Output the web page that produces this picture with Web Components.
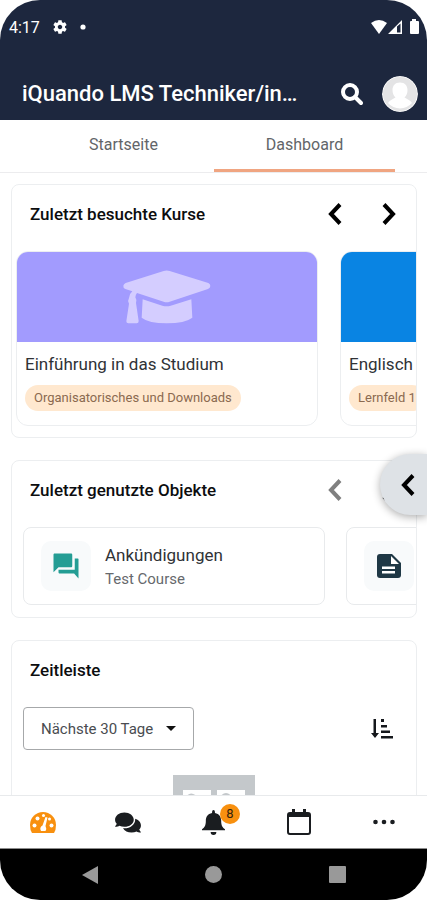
<!DOCTYPE html>
<html lang="de">
<head>
<meta charset="utf-8">
<meta name="viewport" content="width=device-width, initial-scale=1">
<title>iQuando LMS</title>
<style>
  html, body { margin: 0; height: 100%; background: #fff; }
  body { font-family: Roboto, "Liberation Sans", sans-serif; color: #15171a; }
</style>
</head>
<body>
<device-frame>
  <status-bar slot="top" time="4:17"></status-bar>
  <app-header slot="top">iQuando LMS Techniker/in…</app-header>
  <tab-strip slot="top">
    <tab-item>Startseite</tab-item>
    <tab-item selected>Dashboard</tab-item>
  </tab-strip>

  <block-card heading="Zuletzt besuchte Kurse" pager>
    <card-row class="courses">
      <course-card tag="Organisatorisches und Downloads">Einführung in das Studium
        <svg slot="art" width="88" height="54" viewBox="38 31 264 162" fill="#d4cdff" aria-hidden="true"><path d="M160 34Q169 31 178 34L294 70Q300 73 300 79Q300 85 293 88L178 126Q169 129 160 126L80 100Q76 104 75 113Q80 120 77 130L85 184Q85 191 79 191H54Q48 191 48 185L56 132Q51 123 56 115Q58 101 66 95L45 88Q38 85 39 78Q40 73 46 70Z"/><path d="M97 119L156 138Q169 142 181 138L243 119L246 174Q224 191 169 191Q115 191 94 174Z"/></svg>
      </course-card>
      <course-card tag="Lernfeld 1" color="#0984e3">Englisch</course-card>
    </card-row>
  </block-card>

  <block-card heading="Zuletzt genutzte Objekte" pager at-start>
    <card-row class="objects">
      <object-card sub="Test Course">Ankündigungen
        <svg slot="icon" width="30" height="30" viewBox="0 0 24 24" fill="#249d94" aria-hidden="true"><path d="M21.500 6H19v9H6v2c0 .55.45 1 1 1h11.500l3.500 4V6.500c0-.3-.2-.5-.5-.5zM17 12V3c0-.55-.45-1-1-1H3c-.55 0-1 .45-1 1v14l4-4h10c.55 0 1-.45 1-1z"/></svg>
      </object-card>
      <object-card>
        <svg slot="icon" width="24" height="24" viewBox="0 0 24 24" aria-hidden="true"><path fill="#1f3845" d="M3 0H15L24 9V21Q24 24 21 24H3Q0 24 0 21V3Q0 0 3 0Z"/><path fill="#fff" d="M14 2V10H22ZM5 12.500H18V15H5ZM5 17H18V19.500H5Z"/></svg>
      </object-card>
    </card-row>
  </block-card>

  <block-card heading="Zeitleiste">
    <timeline-tools></timeline-tools>
    <empty-art></empty-art>
  </block-card>

  <drawer-handle slot="overlay"></drawer-handle>
  <bottom-nav slot="bottom"></bottom-nav>
  <system-nav slot="bottom"></system-nav>
</device-frame>

<script>
const RESET = `
  :host, *, *::before, *::after { box-sizing: border-box; }
  button { font: inherit; color: inherit; background: none; border: 0; margin: 0; padding: 0; display: grid; place-items: center; cursor: pointer; }
  svg { display: block; }
`;
const define = (name, render) => customElements.define(name, class extends HTMLElement {
  constructor() {
    super();
    this.attachShadow({ mode: 'open' });
  }
  connectedCallback() {
    const t = document.createElement('template');
    const { css, html } = render(this);
    t.innerHTML = `<style>${RESET}${css}</style>${html}`;
    this.shadowRoot.replaceChildren(t.content.cloneNode(true));
  }
});

const chevron = (dir) => `<svg width="14" height="22" viewBox="0 0 14 22" fill="none" stroke="currentColor" stroke-width="4" aria-hidden="true"><path d="${dir === 'left' ? 'M12 1.500L3 11L12 20.500' : 'M2 1.500L11 11L2 20.500'}"/></svg>`;

define('device-frame', () => ({
  css: `
    :host { display: flex; flex-direction: column; height: 100vh; border-radius: 40px; overflow: hidden; position: relative; background: #fff; }
    main { flex: 1; min-height: 0; overflow: hidden; display: flex; flex-direction: column; gap: 22px; padding: 11px 10px 0 11px; }
    ::slotted(block-card) { flex: none; }
  `,
  html: `<slot name="top"></slot><main><slot></slot></main><slot name="bottom"></slot><slot name="overlay"></slot>`
}));

define('status-bar', (el) => ({
  css: `
    :host { display: flex; align-items: center; gap: 13px; height: 54px; padding: 0 7px 0 9px; background: #1d273e; color: #fff; font-size: 16px; }
    .right { margin-left: auto; }
  `,
  html: `
    <span>${el.getAttribute('time')}</span>
    <svg width="14" height="14" viewBox="2 2 20 20" fill="#fff" aria-hidden="true"><path d="M19.140 12.940c.04-.3.06-.61.06-.94 0-.32-.02-.64-.07-.94l2.030-1.580c.18-.14.23-.41.12-.61l-1.920-3.320c-.12-.22-.37-.29-.59-.22l-2.390.96c-.5-.38-1.030-.7-1.620-.94l-.36-2.540c-.04-.24-.24-.41-.48-.41h-3.840c-.24 0-.43.17-.47.41l-.36 2.540c-.59.24-1.130.57-1.620.94l-2.390-.96c-.22-.08-.47 0-.59.22L2.740 8.870c-.12.21-.08.47.12.61l2.030 1.580c-.05.3-.09.63-.09.94s.02.64.07.94l-2.030 1.580c-.18.14-.23.41-.12.61l1.920 3.320c.12.22.37.29.59.22l2.390-.96c.5.38 1.030.7 1.620.94l.36 2.540c.05.24.24.41.48.41h3.840c.24 0 .44-.17.47-.41l.36-2.540c.59-.24 1.130-.56 1.620-.94l2.390.96c.22.08.47 0 .59-.22l1.920-3.320c.12-.22.07-.47-.12-.61l-2.010-1.580zM12 15.200c-1.770 0-3.200-1.430-3.200-3.200s1.430-3.200 3.200-3.200 3.200 1.430 3.200 3.200-1.430 3.200-3.200 3.200z"/></svg>
    <svg width="6" height="6" viewBox="0 0 6 6" fill="#fff" aria-hidden="true"><circle cx="3" cy="3" r="2.600"/></svg>
    <svg class="right" width="50" height="16" viewBox="0 0 50 16" aria-hidden="true">
      <path fill="#fff" d="M1 4Q9-2 17 4L9 15Z"/>
      <path fill="#fff" fill-rule="evenodd" d="M18 15L32 1V15ZM27 7.500V13.500H30.500V4.500Z"/>
      <path fill="#fff" d="M42 0H46V2H48Q49 2 49 3V14Q49 15 48 15H41Q40 15 40 14V3Q40 2 41 2H42Z"/>
    </svg>`
}));

define('app-header', () => ({
  css: `
    :host { display: block; background: #1d273e; color: #fff; }
    header { display: flex; align-items: center; height: 66px; padding: 14px 9px 0 22px; }
    h1 { margin: 0; flex: 1; min-width: 0; font-size: 22px; line-height: 28px; font-weight: 500; white-space: nowrap; overflow: hidden; text-overflow: ellipsis; }
    button { width: 24px; height: 36px; margin: 0 18px 0 16px; }
    .avatar { width: 36px; margin: 0; border-radius: 50%; overflow: hidden; }
  `,
  html: `<header><h1><slot></slot></h1>
    <button aria-label="Suche"><svg width="22" height="23" viewBox="0 0 22 23" fill="none" stroke="#fff" stroke-width="4" aria-hidden="true"><circle cx="9" cy="9" r="7"/><path d="M14 14L20 20" stroke-linecap="round"/></svg></button>
    <button class="avatar" aria-label="Profil"><svg width="36" height="36" viewBox="0 0 36 36" aria-hidden="true"><circle cx="18" cy="18" r="18" fill="#f8f8f8"/><circle cx="18" cy="18" r="17" fill="#e4e4e5"/><path fill="#fff" d="M18 6.500c5 0 7.500 3.500 7.500 7.500 0 3-1 5.500-3 7.500 3 1.500 6 3 7.500 5.500A16 16 0 0 1 6 27c1.500-2.500 4.500-4 7.500-5.500-2-2-3-4.500-3-7.500 0-4 2.500-7.500 7.500-7.500z"/></svg></button></header>`
}));

define('tab-strip', () => ({
  css: `
    :host { display: block; background: #fff; border-bottom: 1px solid #ececee; }
    div { display: flex; padding: 0 32px 0 33px; }
    ::slotted(*) { flex: 1; }
  `,
  html: `<div role="tablist"><slot></slot></div>`
}));

define('tab-item', (el) => ({
  css: `
    :host { display: block; }
    button { width: 100%; height: 52px; font-size: 16px; line-height: 20px; color: #626569; border-bottom: 3px solid transparent; }
    button[aria-selected="true"] { border-color: #f0a581; }
  `,
  html: `<button role="tab" aria-selected="${el.hasAttribute('selected')}"><slot></slot></button>`
}));

define('block-card', (el) => ({
  css: `
    :host { display: block; border: 1px solid #eceef0; border-radius: 8px; overflow: hidden; background: #fff; }
    header { display: flex; align-items: center; height: 58px; padding-left: 18px; margin-bottom: 8px; }
    h2 { margin: 0; flex: 1; font-size: 17px; line-height: 24px; font-weight: 500; color: #0c0d0f; }
    button { width: 54px; height: 48px; color: #000; }
    button:disabled { color: #808080; }
  `,
  html: `<header><h2>${el.getAttribute('heading')}</h2>${el.hasAttribute('pager') ? `
    <button aria-label="Zurück" ${el.hasAttribute('at-start') ? 'disabled' : ''}>${chevron('left')}</button>
    <button aria-label="Weiter">${chevron('right')}</button>` : ''}</header><slot></slot>`
}));

define('card-row', () => ({
  css: `
    :host { display: flex; gap: 22px; padding: 0 4px 11px; overflow: hidden; }
    :host(.objects) { gap: 21px; padding: 0 11px 12px; }
    ::slotted(*) { flex: none; width: 302px; }
  `,
  html: `<slot></slot>`
}));

define('course-card', (el) => ({
  css: `
    :host { display: block; height: 175px; border: 1px solid #eceef0; border-radius: 12px; overflow: hidden; background: #fff; }
    .cover { height: 90px; display: grid; place-items: center; background: ${el.getAttribute('color') || '#a29bfe'}; }
    .body { display: flex; flex-direction: column; align-items: flex-start; gap: 9px; padding: 10px 8px; }
    h3 { margin: 0; font-size: 17px; line-height: 24px; font-weight: 400; color: #303236; white-space: nowrap; }
    .tag { height: 26px; padding: 0 9px; border-radius: 13px; background: #ffe8cf; color: #8b6a50; font-size: 13px; line-height: 25px; white-space: nowrap; }
  `,
  html: `<div class="cover"><slot name="art"></slot></div><div class="body"><h3><slot></slot></h3><span class="tag">${el.getAttribute('tag')}</span></div>`
}));

define('object-card', (el) => ({
  css: `
    :host { display: flex; align-items: center; gap: 14px; height: 78px; padding: 0 17px; border: 1px solid #e8eaec; border-radius: 8px; background: #fff; }
    .icon { flex: none; width: 50px; height: 50px; border-radius: 10px; background: #f8fafb; display: grid; place-items: center; }
    h3 { margin: 0; font-size: 17px; line-height: 26px; font-weight: 400; color: #303236; }
    p { margin: 0; font-size: 15px; line-height: 22px; color: #66696d; }
  `,
  html: `<div class="icon"><slot name="icon"></slot></div><div><h3><slot></slot></h3>${el.hasAttribute('sub') ? `<p>${el.getAttribute('sub')}</p>` : ''}</div>`
}));

define('timeline-tools', () => ({
  css: `
    :host { display: flex; align-items: center; justify-content: space-between; padding: 0 23px 0 11px; }
    label { display: grid; align-items: center; border: 1px solid #a6a8aa; border-radius: 4px; }
    select { grid-area: 1 / 1; appearance: none; font: inherit; font-size: 15px; color: #494c50; border: 0; background: none; height: 41px; padding: 0 39px 0 17px; margin: 0; }
    label svg { grid-area: 1 / 1; justify-self: end; margin-right: 17px; pointer-events: none; }
  `,
  html: `<label><select aria-label="Zeitraum"><option>Nächste 30 Tage</option></select>
    <svg width="10" height="5" viewBox="0 0 10 5" aria-hidden="true"><path d="M0 0H10L5 5Z" fill="#111"/></svg></label>
    <button aria-label="Sortieren"><svg width="22" height="22" viewBox="0 0 22 22" fill="#15181c" aria-hidden="true"><path d="M2.500 1H5V15H8L4 20L0 15H2.500ZM10 1H13V4H10ZM10 7H16V9.500H10ZM10 12.500H19V15H10ZM10 18H22V20.500H10Z"/></svg></button>`
}));

define('empty-art', () => ({
  css: `:host { display: flex; justify-content: center; padding: 25px 0 30px; }`,
  html: `<svg width="82" height="90" viewBox="0 0 82 90" aria-hidden="true"><path fill="#c4c8cb" d="M0 0H82V90H0Z"/><path fill="#fff" d="M10 15H38V43H10ZM44 15H72V43H44ZM10 49H72V55H10ZM10 62H60V68H10Z"/><path fill="none" stroke="#c4c8cb" stroke-width="2" d="M15 21Q18 18 22 21M49 21Q53 17 57 21"/></svg>`
}));

define('drawer-handle', () => ({
  css: `
    :host { position: absolute; right: 0; top: 454px; }
    button { width: 47px; height: 61px; padding-left: 8px; border-radius: 31px 0 0 31px; background: #dee2e6; color: #000; box-shadow: 0 2px 8px rgba(0,0,0,.32); }
  `,
  html: `<button aria-label="Blockleiste öffnen">${chevron('left')}</button>`
}));

define('bottom-nav', () => ({
  css: `
    :host { display: block; flex: none; background: #fff; border-top: 1px solid #e8eaec; border-bottom: 1px solid #8c8c8c; }
    nav { display: grid; grid-template-columns: repeat(5, 1fr); height: 52px; }
    button { color: #1a1d20; }
    .active { color: #f8900f; }
    .bell { position: relative; }
    .badge { position: absolute; left: 18px; top: -6px; width: 20px; height: 20px; border-radius: 50%; background: #f8900f; color: #33230d; font-size: 13px; line-height: 20px; text-align: center; }
  `,
  html: `<nav aria-label="Hauptnavigation">
    <button class="active" aria-label="Dashboard"><svg width="26" height="21" viewBox="0 0 26 21" fill="currentColor" aria-hidden="true"><path d="M2 21Q0 18 0 13A13 13 0 0 1 26 13Q26 18 24 21Z"/><g fill="#fff"><circle cx="4.500" cy="13.500" r="2"/><circle cx="7.500" cy="6.500" r="2"/><circle cx="13.500" cy="3.500" r="1.500"/><circle cx="21.500" cy="13.500" r="2"/><circle cx="19.500" cy="7" r="1.500"/><path d="M15.500 5L17.500 5.500L15.500 14Q17 17 15.500 19H11Q9 15.500 12.500 13.500Z"/></g></svg></button>
    <button aria-label="Mitteilungen"><svg width="26" height="23" viewBox="0 0 576 512" fill="currentColor" aria-hidden="true"><path d="M416 192c0-88.400-93.100-160-208-160S0 103.600 0 192c0 34.300 14.100 65.900 38 92-13.400 30.200-35.500 54.200-35.800 54.500-2.200 2.300-2.800 5.700-1.500 8.700S4.800 352 8 352c36.600 0 66.900-12.300 88.700-25 32.200 15.700 70.300 25 111.300 25 114.900 0 208-71.600 208-160zm122 220c23.900-26 38-57.700 38-92 0-66.900-53.500-124.200-129.300-148.100.9 6.600 1.300 13.300 1.300 20.100 0 105.900-107.700 192-240 192-10.800 0-21.300-.8-31.700-1.900C207.800 439.600 281.800 480 368 480c41 0 79.100-9.200 111.300-25 21.800 12.700 52.100 25 88.700 25 3.200 0 6.100-1.900 7.300-4.800 1.300-2.900.7-6.300-1.500-8.700-.3-.2-22.400-24.200-35.800-54.500z"/></svg></button>
    <button aria-label="Benachrichtigungen"><span class="bell"><svg width="23" height="25" viewBox="0 0 24 26" fill="currentColor" aria-hidden="true"><path d="M10.500 2Q10.500 0 12 0T13.500 2V3C18 4 20 7 20 11C20 16 21 18 24 20V21H0V20C3 18 4 16 4 11C4 7 6 4 10.500 3ZM9 23H15Q15 26 12 26T9 23Z"/></svg><span class="badge">8</span></span></button>
    <button aria-label="Kalender"><svg width="24" height="26" viewBox="0 0 24 26" aria-hidden="true"><path fill="currentColor" fill-rule="evenodd" d="M5 0H8V3H16V0H19V3H21Q24 3 24 6V23Q24 26 21 26H3Q0 26 0 23V6Q0 3 3 3H5ZM2 8V23Q2 24 3 24H21Q22 24 22 23V8Z"/></svg></button>
    <button aria-label="Mehr"><svg width="22" height="6" viewBox="0 0 22 6" fill="currentColor" aria-hidden="true"><circle cx="2.500" cy="3" r="2.300"/><circle cx="11" cy="3" r="2.300"/><circle cx="19.500" cy="3" r="2.300"/></svg></button>
  </nav>`
}));

define('system-nav', () => ({
  css: `
    :host { display: grid; flex: none; grid-template-columns: repeat(3, 1fr); height: 51px; padding: 0 28px; background: #000; color: #999; }
  `,
  html: `
    <button aria-label="Zurück"><svg width="16" height="18" viewBox="0 0 16 18" fill="currentColor" aria-hidden="true"><path d="M16 0V18L0 9Z"/></svg></button>
    <button aria-label="Startbildschirm"><svg width="17" height="17" viewBox="0 0 17 17" fill="currentColor" aria-hidden="true"><circle cx="8.500" cy="8.500" r="8.500"/></svg></button>
    <button aria-label="Übersicht"><svg width="17" height="17" viewBox="0 0 17 17" fill="currentColor" aria-hidden="true"><rect width="17" height="17" rx="1"/></svg></button>`
}));
</script>
</body>
</html>
